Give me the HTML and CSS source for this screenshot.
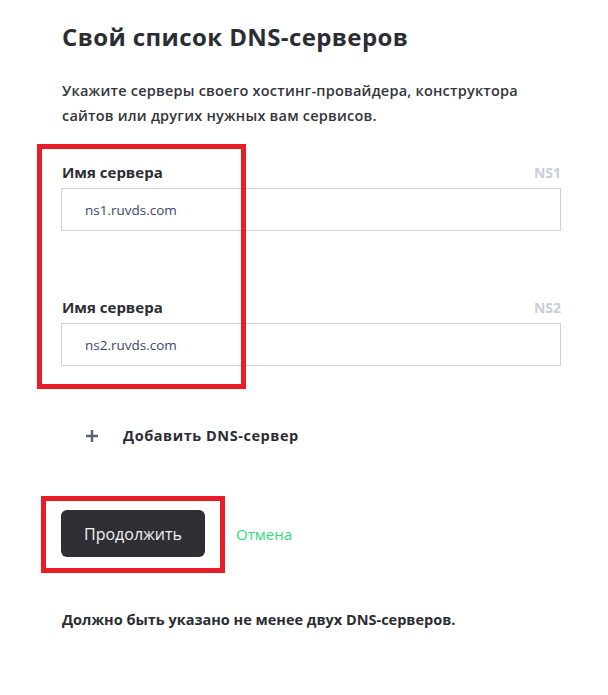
FILE: index.html
```html
<!DOCTYPE html>
<html lang="ru">
<head>
<meta charset="utf-8">
<link rel="stylesheet" href="styles.css">
</head>
<body>
<main class="page">
  <h1 class="title">Свой список DNS-серверов</h1>
  <p class="lead">Укажите серверы своего хостинг-провайдера, конструктора сайтов или других нужных вам сервисов.</p>

  <div class="field field-first">
    <div class="field-head">
      <span class="field-label">Имя сервера</span>
      <span class="field-tag">NS1</span>
    </div>
    <div class="input">ns1.ruvds.com</div>
  </div>

  <div class="field field-second">
    <div class="field-head">
      <span class="field-label">Имя сервера</span>
      <span class="field-tag">NS2</span>
    </div>
    <div class="input">ns2.ruvds.com</div>
  </div>

  <div class="add-row">
    <svg class="plus" width="12" height="12" viewBox="0 0 12 12" aria-hidden="true">
      <path d="M6 0V12M0 6H12" stroke="#5b616e" stroke-width="2.4" fill="none"/>
    </svg>
    <span class="add-text">Добавить DNS-сервер</span>
  </div>

  <div class="actions">
    <button class="btn-primary" type="button">Продолжить</button>
    <a class="btn-cancel" href="#">Отмена</a>
  </div>

  <p class="note">Должно быть указано не менее двух DNS-серверов.</p>
</main>

<div class="mark mark-fields"></div>
<div class="mark mark-button"></div>
</body>
</html>
```

FILE: styles.css
```css
html, body {
  margin: 0;
  padding: 0;
  background: #ffffff;
}

body {
  font-family: "Open Sans", "Noto Sans", "Liberation Sans", sans-serif;
  color: #2b2d33;
  position: relative;
  width: 608px;
  height: 695px;
  overflow: hidden;
}

.page {
  margin-left: 61px;
  width: 500px;
  padding-top: 22px;
}

.title {
  margin: 0 0 0 1px;
  font-size: 24px;
  line-height: 30px;
  font-weight: 700;
  letter-spacing: 0.4px;
  color: #2b2d33;
}

.lead {
  margin: 27px 0 0 1px;
  font-size: 14.5px;
  line-height: 24.5px;
  font-weight: 600;
  letter-spacing: 0.22px;
  color: #33353a;
  width: 480px;
}

.field {
  display: flex;
  flex-direction: column;
}

.field-first {
  margin-top: 34px;
}

.field-second {
  margin-top: 66px;
}

.field-head {
  display: flex;
  justify-content: space-between;
  align-items: baseline;
  height: 20px;
  margin-bottom: 6px;
  padding-left: 1px;
}

.field-label {
  font-size: 15px;
  line-height: 20px;
  font-weight: 700;
  color: #2b2d33;
}

.field-tag {
  font-size: 14px;
  line-height: 20px;
  font-weight: 700;
  color: #c9cdd6;
}

.input {
  box-sizing: border-box;
  height: 43px;
  border: 1px solid #cdd3de;
  padding-left: 23px;
  display: flex;
  align-items: center;
  font-size: 13.5px;
  color: #3c4670;
}

.add-row {
  margin-top: 60px;
  display: flex;
  align-items: center;
  padding-left: 25px;
  height: 20px;
}

.plus {
  flex: none;
}

.add-text {
  margin-left: 25px;
  font-size: 14.5px;
  line-height: 20px;
  font-weight: 700;
  letter-spacing: 0.55px;
  color: #2b2d33;
}

.actions {
  margin-top: 64px;
  display: flex;
  align-items: center;
  gap: 31px;
}

.btn-primary {
  width: 144px;
  height: 47px;
  border: none;
  border-radius: 6px;
  background: #2d2f34;
  color: #f2f2f2;
  font-family: inherit;
  font-size: 16px;
  font-weight: 400;
  padding: 0;
}

.btn-cancel {
  font-size: 15px;
  color: #2fdc7c;
  text-decoration: none;
}

.note {
  margin: 53px 0 0 1px;
  font-size: 14.5px;
  line-height: 20px;
  font-weight: 700;
  color: #2b2d33;
}

.mark {
  position: absolute;
  box-sizing: border-box;
  border: 5px solid #e81d27;
}

.mark-fields {
  left: 37px;
  top: 144px;
  width: 209px;
  height: 245px;
}

.mark-button {
  left: 41px;
  top: 496px;
  width: 184px;
  height: 77px;
}
```
